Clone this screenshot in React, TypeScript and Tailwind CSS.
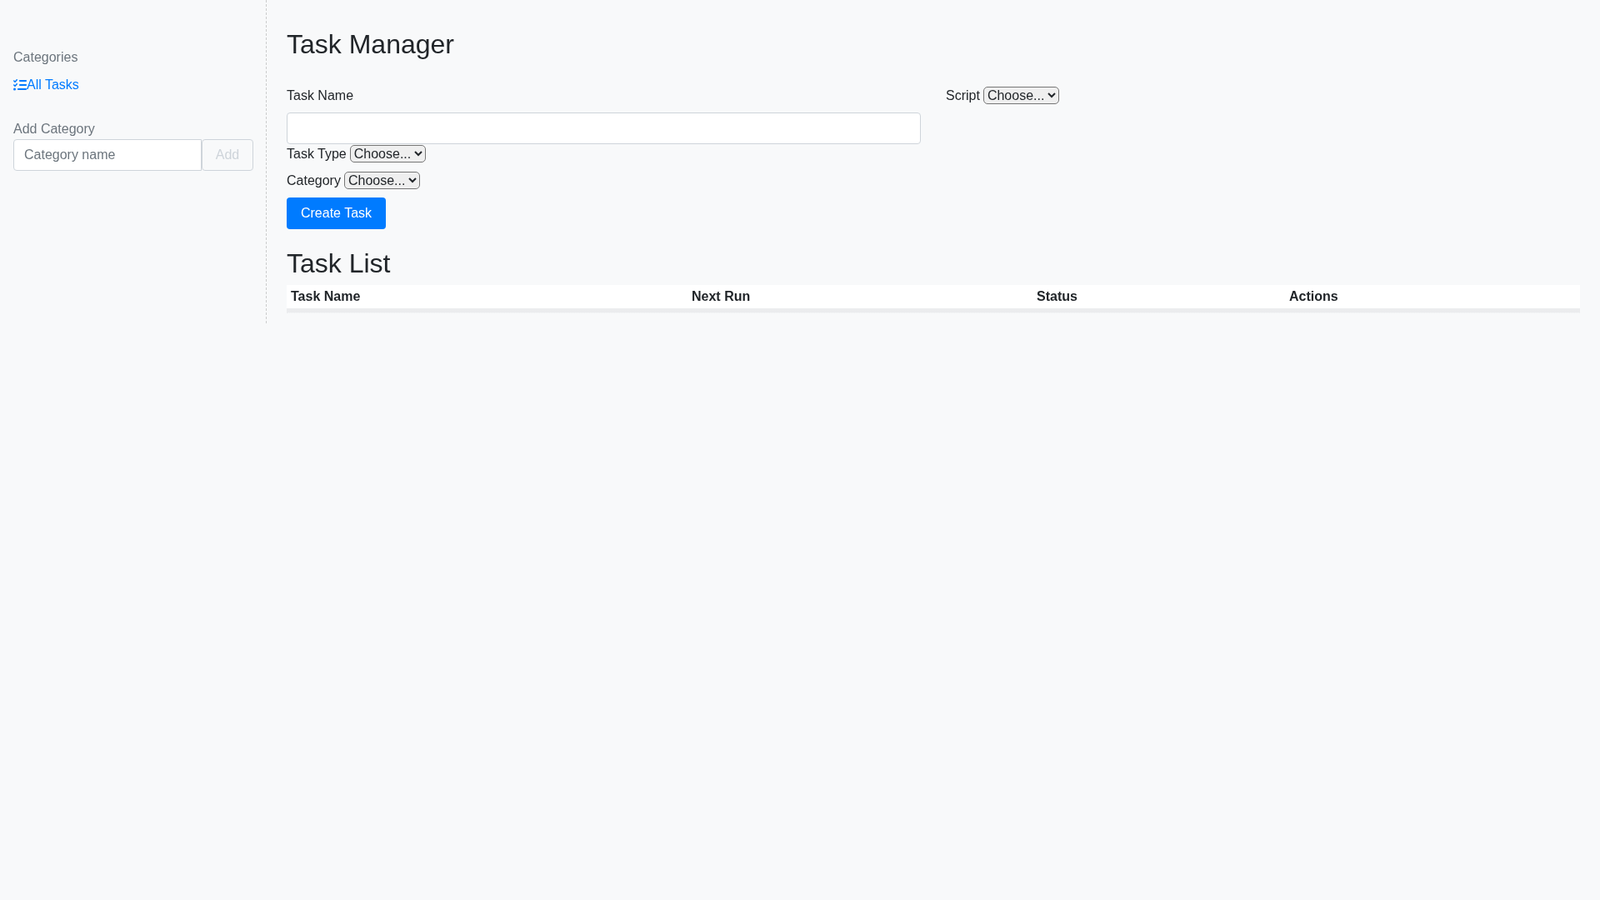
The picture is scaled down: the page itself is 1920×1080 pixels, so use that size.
import { FaListCheck } from 'react-icons/fa6';

const FONT = "font-['Liberation_Sans',Arial,sans-serif]";

function ChooseSelect() {
  return (
    <select className="mt-px h-[21px] appearance-auto rounded-[5px] border border-[#767676] bg-[#efefef] text-base leading-none text-[#212529]">
      <option>Choose...</option>
    </select>
  );
}

function Sidebar() {
  return (
    <aside className="h-[388px] w-[320px] shrink-0 border-r border-dashed border-r-[#cccccc] pr-[15px] pl-4 pt-[57px]">
      <div className="leading-6 text-[#6c757d]">Categories</div>
      <a href="#" className="mt-[9px] flex h-6 items-center text-[#007bff]">
        <span className="-mt-px">
          <FaListCheck size={16} />
        </span>
        All Tasks
      </a>
      <div className="mt-[29px] leading-6 text-[#6c757d]">Add Category</div>
      <div className="flex">
        <input
          placeholder="Category name"
          className="h-[38px] w-[226px] rounded-l-[4px] border border-[#ced4da] bg-white px-3 text-base placeholder:text-[#6c757d]"
        />
        <button disabled className="h-[38px] w-[62px] rounded-[4px] border border-[#ced4da] text-[#ced4da]">
          Add
        </button>
      </div>
    </aside>
  );
}

function TaskForm() {
  return (
    <form>
      <div className="grid grid-cols-2 gap-x-[30px]">
        <div>
          <label className="block leading-6">Task Name</label>
          <input className="mt-2 block h-[38px] w-full rounded-[4px] border border-[#ced4da] bg-white" />
        </div>
        <div className="flex h-6 items-start gap-1 leading-6">
          <label>Script</label>
          <ChooseSelect />
        </div>
      </div>
      <div className="flex h-6 items-start gap-1 leading-6">
        <label>Task Type</label>
        <ChooseSelect />
      </div>
      <div className="mt-2 flex h-6 items-start gap-1 leading-6">
        <label>Category</label>
        <ChooseSelect />
      </div>
      <button type="button" className="mt-2 block h-[38px] w-[119px] rounded-[4px] bg-[#007bff] text-white">
        Create Task
      </button>
    </form>
  );
}

function TaskTable() {
  const cols = ['Task Name', 'Next Run', 'Status', 'Actions'];
  return (
    <table className="mt-[7px] w-full table-fixed border-separate border-spacing-0 border-b border-dotted border-b-[#eef0f1]">
      <colgroup>
        <col className="w-[481px]" />
        <col className="w-[414px]" />
        <col className="w-[303px]" />
        <col />
      </colgroup>
      <thead>
        <tr className="bg-white text-left">
          {cols.map((c) => (
            <th key={c} className="h-[33px] border-b-[5px] border-b-[#ebecee] px-[5px] font-bold">
              {c}
            </th>
          ))}
        </tr>
      </thead>
    </table>
  );
}

export default function App() {
  return (
    <div className={`${FONT} min-h-[1080px] bg-[#f8f9fa] text-base text-[#212529]`}>
      <div className="flex will-change-transform">
        <Sidebar />
        <main className="min-w-0 flex-1 pr-6 pl-6 pt-[34px]">
          <h2 className="mb-[31px] text-[32px] leading-[38px] font-medium">Task Manager</h2>
          <TaskForm />
          <h2 className="mt-[22px] text-[32px] leading-[38px] font-medium">Task List</h2>
          <TaskTable />
        </main>
      </div>
    </div>
  );
}
